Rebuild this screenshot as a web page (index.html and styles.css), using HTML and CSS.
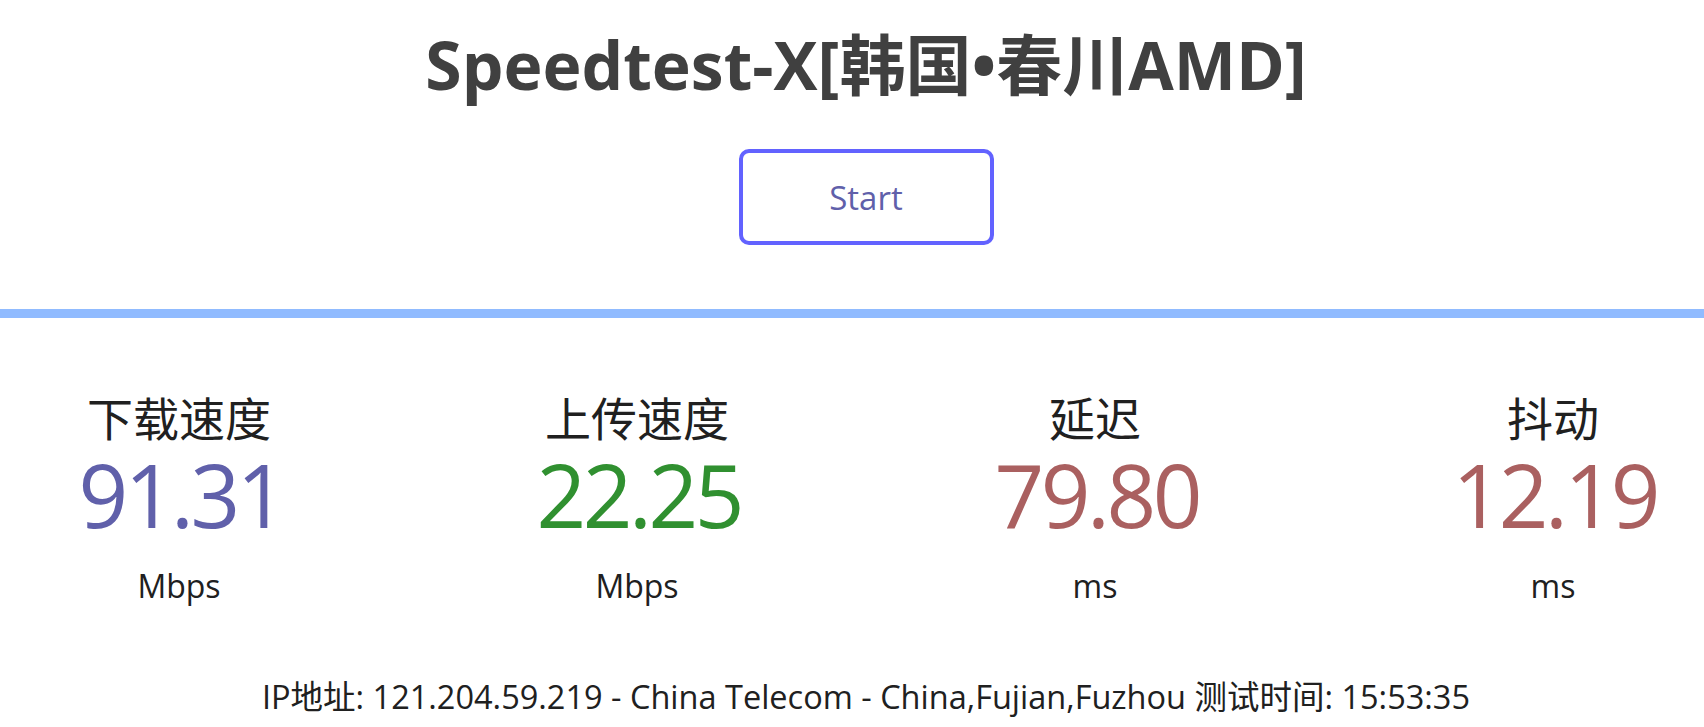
FILE: index.html
```html
<!DOCTYPE html>
<html lang="zh-CN">
<head>
<meta charset="utf-8">
<title>Speedtest-X</title>
<link rel="stylesheet" href="styles.css">
</head>
<body>
<main class="page">
  <header class="hero">
    <h1 class="title">Speedtest-X[韩国•春川AMD]</h1>
    <button class="start-btn" type="button">Start</button>
  </header>
  <div class="progress"><div class="progress-fill"></div></div>
  <section class="results">
    <div class="metric">
      <div class="metric-name">下载速度</div>
      <div class="metric-value value-dl">91.31</div>
      <div class="metric-unit">Mbps</div>
    </div>
    <div class="metric">
      <div class="metric-name">上传速度</div>
      <div class="metric-value value-ul">22.25</div>
      <div class="metric-unit">Mbps</div>
    </div>
    <div class="metric">
      <div class="metric-name">延迟</div>
      <div class="metric-value value-ping">79.80</div>
      <div class="metric-unit">ms</div>
    </div>
    <div class="metric">
      <div class="metric-name">抖动</div>
      <div class="metric-value value-ping">12.19</div>
      <div class="metric-unit">ms</div>
    </div>
  </section>
  <p class="info">IP地址: 121.204.59.219 - China Telecom - China,Fujian,Fuzhou 测试时间: 15:53:35</p>
</main>
</body>
</html>
```

FILE: styles.css
```css
html, body {
  margin: 0;
  padding: 0;
  background: #ffffff;
  color: #202020;
}

body {
  font-family: "Open Sans", "Noto Sans CJK SC", sans-serif;
  text-align: center;
  overflow: hidden;
}

.page {
  display: flex;
  flex-direction: column;
}

.hero {
  display: flex;
  flex-direction: column;
  align-items: center;
  padding: 24px 0 0 28px;
}

.title {
  margin: 0;
  font-size: 66px;
  line-height: 80px;
  font-weight: 700;
  color: #404040;
  white-space: nowrap;
}

.start-btn {
  margin-top: 45px;
  width: 255px;
  height: 96px;
  box-sizing: border-box;
  border: 4px solid #6262ff;
  border-radius: 10px;
  background: transparent;
  color: #6060aa;
  font-family: "Open Sans", sans-serif;
  font-size: 33px;
  padding: 0;
  cursor: pointer;
}

.progress {
  margin-top: 64px;
  height: 9px;
  background: #eeeeee;
}

.progress-fill {
  width: 100%;
  height: 100%;
  background: #90bbff;
}

.results {
  display: flex;
  justify-content: center;
  padding-left: 28px;
  margin-top: 69px;
  overflow: hidden;
}

.metric {
  flex: 0 0 458px;
  display: flex;
  flex-direction: column;
  align-items: center;
}

.metric-name {
  font-size: 46px;
  line-height: 62px;
  color: #202020;
}

.metric-value {
  font-size: 87px;
  line-height: 90px;
  letter-spacing: -3.5px;
  text-indent: 3.5px;
}

.value-dl { color: #6060aa; }
.value-ul { color: #309030; }
.value-ping { color: #aa6060; }

.metric-unit {
  margin-top: 27px;
  font-size: 32px;
  line-height: 40px;
  color: #202020;
}

.info {
  margin: 71px 0 0;
  padding-left: 28px;
  font-size: 32.5px;
  line-height: 40px;
  color: #202020;
  white-space: nowrap;
}
```
